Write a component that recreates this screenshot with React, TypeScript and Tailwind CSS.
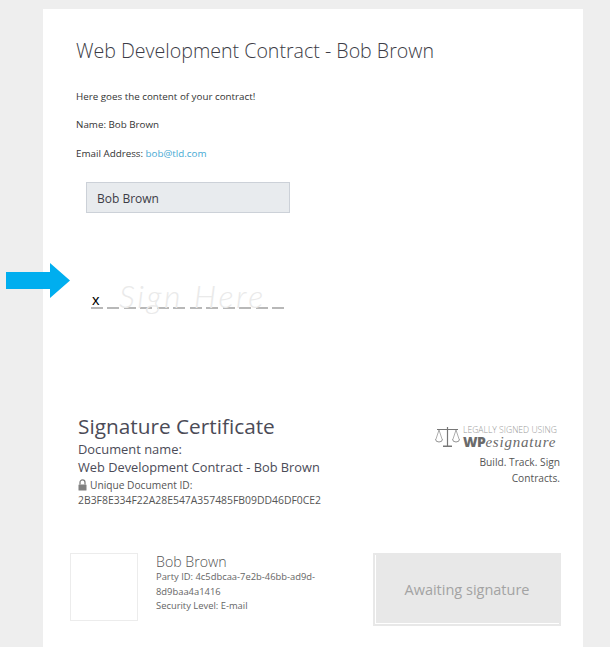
import React from 'react';

const OPEN_SANS = 'font-["Open_Sans",sans-serif]';
const DASHES = Array.from({ length: 12 }, (_, i) => i);

function ScalesIcon() {
  return (
    <svg width="25" height="22" viewBox="0 0 25 22" fill="none" stroke="#777" strokeWidth="1" className="shrink-0">
      <path d="M12.5 1v19M2 3.5h21" strokeWidth="1.2" />
      <path d="M8 19.5h9V21H8z" fill="#777" stroke="none" />
      <path d="M4 4l-3 9M4 4l3 9M21 4l-3 9M21 4l3 9" strokeWidth="0.6" />
      <path d="M0.5 13a3.5 3 0 0 0 7 0M17.5 13a3.5 3 0 0 0 7 0" strokeWidth="0.8" />
    </svg>
  );
}

function LockIcon() {
  return (
    <svg width="9" height="12" viewBox="0 0 9 12" className="shrink-0">
      <path d="M2 5.5V3.4a2.5 2.5 0 0 1 5 0v2.1" fill="none" stroke="#808080" strokeWidth="1.3" />
      <rect x="0.5" y="5.5" width="8" height="6" rx="0.6" fill="#808080" />
    </svg>
  );
}

export default function App() {
  return (
    <div className={`relative h-[647px] w-[610px] overflow-hidden bg-[#eeeeee] pt-[9px] ${OPEN_SANS}`}>
      {/* Arrow pointing at the signature field */}
      <svg width="64" height="35" viewBox="0 0 64 35" className="absolute left-[6px] top-[263px]">
        <path d="M0 9h44V0l20 17.5L44 35v-9H0z" fill="#00aeef" />
      </svg>

      <div className="ml-[43px] h-[638px] w-[540px] bg-white pl-[33px]">
        {/* Contract body */}
        <h1 className="pt-[27px] text-[19.6px] font-light leading-[30px] text-[#3c3c46]">
          Web Development Contract - Bob Brown
        </h1>
        <p className="mt-[24px] text-[9.8px] leading-[14px] text-[#333]">Here goes the content of your contract!</p>
        <p className="mt-[14px] text-[9.8px] leading-[14px] text-[#333]">Name: Bob Brown</p>
        <p className="mt-[15px] text-[9.8px] leading-[14px] text-[#333]">
          Email Address: <span className="text-[#45a9d3]">bob@tld.com</span>
        </p>

        <div className="ml-[10px] mt-[21px] flex h-[31px] w-[204px] items-center border border-[#ccd1d8] bg-[#e8ebee] pl-[10px] pt-[2px] text-[12px] text-[#3c3c46]">
          Bob Brown
        </div>

        {/* Signature line */}
        <div className="relative ml-[15px] mt-[62px] h-[34px] w-[193px]">
          <div className="absolute bottom-0 left-0 flex w-full justify-between">
            {DASHES.map((d) => (
              <div key={d} className="h-[2px] w-[12px] bg-[#b8b8b8]" />
            ))}
          </div>
          <span className="absolute bottom-[2px] left-[1px] font-['Liberation_Sans',sans-serif] text-[15px] leading-[14px] text-black">x</span>
          <span className="absolute bottom-[-6px] left-[28px] whitespace-nowrap font-['Lato',sans-serif] text-[32px] font-light italic leading-[38px] tracking-[2.6px] text-[#eaeaea]">
            Sign Here
          </span>
        </div>

        {/* Certificate */}
        <div className="mt-[104px] flex">
          <div className="ml-[2px] w-[340px]">
            <h2 className="text-[20.8px] leading-[27px] text-[#4b4b57]">Signature Certificate</h2>
            <p className="mt-[1px] text-[12.9px] leading-[17px] text-[#4b4b57]">Document name:</p>
            <p className="mt-[1px] text-[12.8px] leading-[17px] text-[#4b4b57]">Web Development Contract - Bob Brown</p>
            <p className="mt-[2px] flex items-center gap-[3px] text-[10.2px] leading-[14px] text-[#555]">
              <LockIcon />
              Unique Document ID:
            </p>
            <p className="mt-[1px] text-[10.4px] leading-[14px] text-[#555]">2B3F8E334F22A28E547A357485FB09DD46DF0CE2</p>
          </div>

          <div className="w-[142px] pt-[12px]">
            <div className="flex items-center justify-end gap-[3px]">
              <ScalesIcon />
              <div className="w-[97px]">
                <div className="whitespace-nowrap text-[8.6px] font-light leading-[10px] text-[#999]">LEGALLY SIGNED USING</div>
                <div className="flex items-baseline whitespace-nowrap">
                  <span className="inline-block text-[14px] font-extrabold leading-[13px] tracking-[-0.5px] text-[#6a6a6a]">WP</span>
                  <span className="inline-block font-['Liberation_Serif',serif] text-[15px] italic leading-[13px] tracking-[0.8px] text-[#6a6a6a]">esignature</span>
                </div>
              </div>
            </div>
            <p className="ml-auto mt-[5px] w-[90px] text-right text-[10.2px] leading-[16px] text-[#555]">Build. Track. Sign Contracts.</p>
          </div>
        </div>

        {/* Signer */}
        <div className="-ml-[6px] mt-[46px] flex">
          <div className="h-[68px] w-[68px] shrink-0 border border-[#ececec]" />
          <div className="ml-[18px] w-[170px]">
            <div className="text-[14.2px] font-light leading-[17px] text-[#555]">Bob Brown</div>
            <p className="text-[9.4px] leading-[14.5px] text-[#666]">Party ID: 4c5dbcaa-7e2b-46bb-ad9d-8d9baa4a1416</p>
            <p className="text-[9.4px] leading-[14.5px] text-[#666]">Security Level: E-mail</p>
          </div>
          <div className="ml-[47px] flex h-[73px] w-[188px] items-center justify-center border-[2px] border-[#e8e8e8] bg-[#e8e8e8] text-[14.5px] text-[#a3a3a3] shadow-[inset_1px_-1px_0_#ffffff]">
            Awaiting signature
          </div>
        </div>
      </div>
    </div>
  );
}
